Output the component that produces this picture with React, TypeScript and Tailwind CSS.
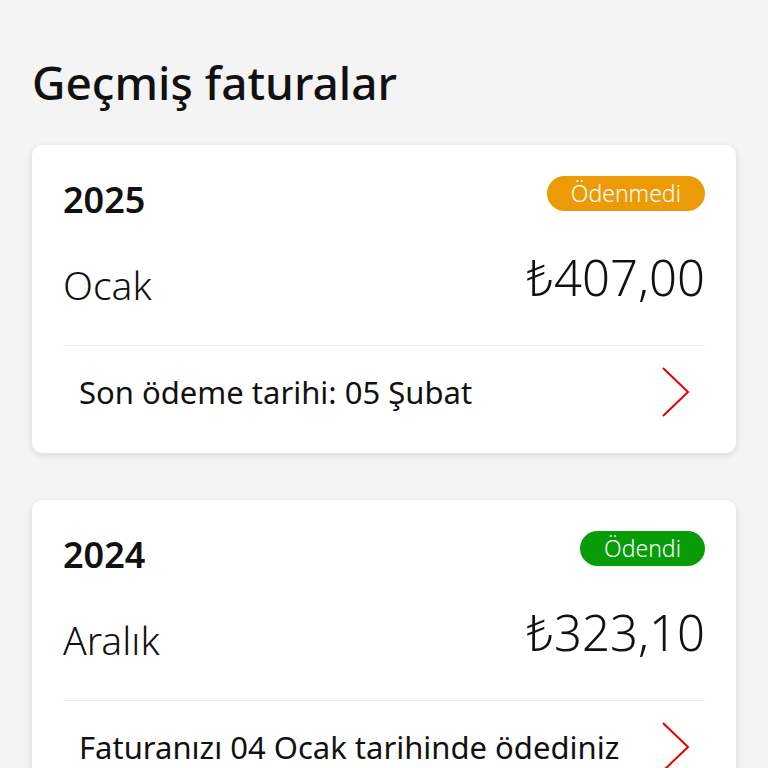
import React from 'react';

type Invoice = {
  year: string;
  month: string;
  amount: string;
  status: 'paid' | 'unpaid';
  note: string;
};

const invoices: Invoice[] = [
  { year: '2025', month: 'Ocak', amount: '₺407,00', status: 'unpaid', note: 'Son ödeme tarihi: 05 Şubat' },
  { year: '2024', month: 'Aralık', amount: '₺323,10', status: 'paid', note: 'Faturanızı 04 Ocak tarihinde ödediniz' },
];

const Chevron = () => (
  <svg width="30" height="50" viewBox="0 0 30 50" fill="none" className="shrink-0">
    <path d="M2 1 L27 25 L2 49" stroke="#e60000" strokeWidth="2" strokeLinejoin="miter" />
  </svg>
);

const InvoiceCard: React.FC<{ invoice: Invoice }> = ({ invoice }) => {
  const paid = invoice.status === 'paid';
  return (
    <div className="bg-white rounded-[10px] shadow-[0_2px_6px_rgba(0,0,0,0.12)] px-[31px]">
      {/* Header */}
      <div className="pt-[31px] pb-[38px] border-b border-[#ececec]">
        <div className="flex items-start justify-between h-[42px]">
          <span className="mt-[5px] text-[36px] leading-[38px] font-semibold text-[#111]">{invoice.year}</span>
          <span
            className={`h-[35px] rounded-full flex items-center px-[24px] text-[23px] font-light text-white ${
              paid ? 'bg-[#089c08]' : 'bg-[#ec9a05]'
            }`}
          >
            {paid ? 'Ödendi' : 'Ödenmedi'}
          </span>
        </div>
        <div className="flex items-start justify-between mt-[31px]">
          <span className="mt-[14px] text-[39px] leading-[44px] font-light text-[#111]">{invoice.month}</span>
          <span className="text-[49px] leading-[56px] font-light text-[#111]">{invoice.amount}</span>
        </div>
      </div>
      {/* Footer */}
      <div className="h-[107px] pb-[15px] flex items-center justify-between pl-[16px] pr-[14px]">
        <span className="text-[31px] text-[#111]">{invoice.note}</span>
        <Chevron />
      </div>
    </div>
  );
};

export default function App() {
  return (
    <div
      className="min-h-screen bg-[#f4f4f4] px-[32px] pt-[52px]"
      style={{ fontFamily: '"Noto Sans", sans-serif' }}
    >
      <h1 className="text-[46px] leading-[60px] font-medium text-[#111]">Geçmiş faturalar</h1>
      <div className="mt-[33px] flex flex-col gap-[47px]">
        {invoices.map(inv => (
          <InvoiceCard key={inv.year} invoice={inv} />
        ))}
      </div>
    </div>
  );
}
